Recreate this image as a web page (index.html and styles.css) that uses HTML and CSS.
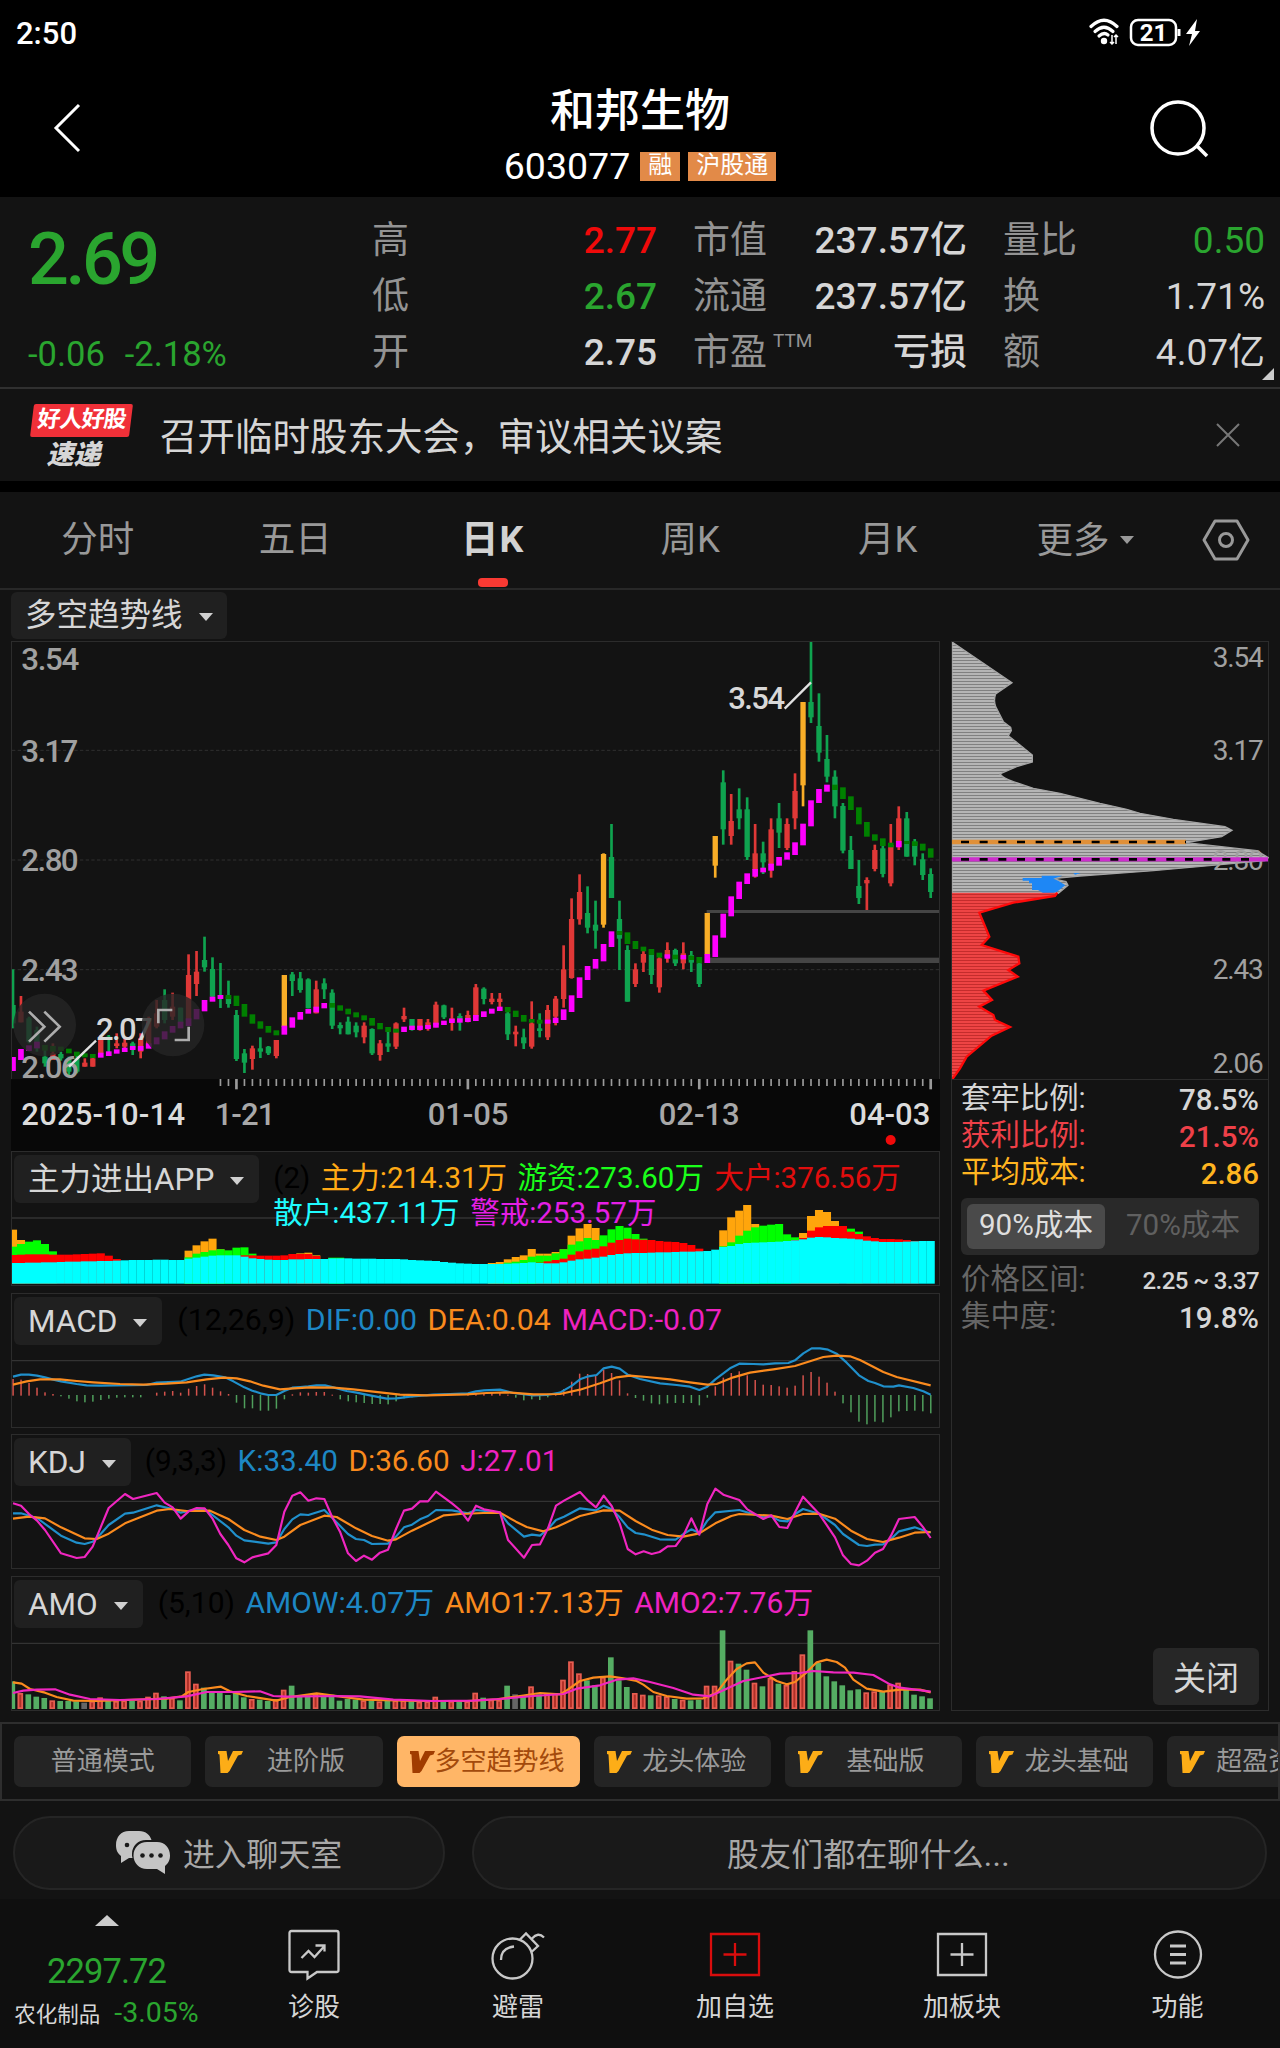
FILE: index.html
```html
<!DOCTYPE html>
<html lang="zh-CN">

<head>
  <meta charset="utf-8">
  <meta name="viewport" content="width=device-width, initial-scale=1.0">
  <title>和邦生物 603077</title>
  <link rel="stylesheet" href="styles.css">
</head>

<body>
  <div class="status">
    <span class="time">2:50</span>
    <svg class="status-icons" width="114" height="30" viewBox="0 0 114 30">
      <g fill="none" stroke="#fff" stroke-width="3.2" stroke-linecap="round">
        <path d="M3 9.5Q16-3 29 9.5" />
        <path d="M7 14.500Q16 6 25 14.500" />
        <path d="M11 19Q16 14.500 20 18" />
      </g>
      <circle cx="16" cy="24" r="3.200" fill="#fff" />
      <path d="M24 18v9M28 27v-9M22 25l2 2 2-2M26 20l2-2 2 2" fill="none" stroke="#fff" stroke-width="1.500" />
      <rect x="43" y="3" width="45" height="25" rx="7" fill="none" stroke="#fff" stroke-width="2.500" />
      <text x="65.500" y="24" class="battery-text" text-anchor="middle">21</text>
      <path d="M91 12v7" stroke="#fff" stroke-width="3" />
      <path d="M109 2l-11 15h6l-3 12 11-15h-5z" fill="#fff" />
    </svg>
  </div>

  <header class="header">
    <svg class="back" width="30" height="50" viewBox="0 0 30 50">
      <path d="M27 2L4 25l23 23" fill="none" stroke="#fff" stroke-width="3" />
    </svg>
    <div class="title">
      <h1>和邦生物</h1>
      <div class="code">603077<span class="tag">融</span><span class="tag">沪股通</span></div>
    </div>
    <svg class="search" width="60" height="60" viewBox="0 0 60 60">
      <circle cx="28" cy="28" r="26" fill="none" stroke="#fff" stroke-width="3.500" />
      <path d="M47 46l10 10" stroke="#fff" stroke-width="3.500" />
    </svg>
  </header>

  <section class="quote">
    <div class="price-box">
      <div class="price">2.69</div>
      <div class="change"><span>-0.06</span><span>-2.18%</span></div>
    </div>
    <dl class="stats">
      <div><dt>高</dt><dd class="up">2.77</dd></div>
      <div><dt>低</dt><dd class="down">2.67</dd></div>
      <div><dt>开</dt><dd>2.75</dd></div>
    </dl>
    <dl class="stats mid">
      <div><dt>市值</dt><dd>237.57亿</dd></div>
      <div><dt>流通</dt><dd>237.57亿</dd></div>
      <div><dt>市盈<sup>TTM</sup></dt><dd class="strong">亏损</dd></div>
    </dl>
    <dl class="stats last">
      <div><dt>量比</dt><dd class="down">0.50</dd></div>
      <div><dt>换</dt><dd>1.71%</dd></div>
      <div><dt>额</dt><dd>4.07亿</dd></div>
    </dl>
    <i class="corner"></i>
  </section>

  <section class="news">
    <div class="news-logo"><b>好人好股</b><em>速递</em></div>
    <p>召开临时股东大会，审议相关议案</p>
    <svg width="24" height="24" viewBox="0 0 24 24">
      <path d="M1 1l22 22M23 1L1 23" stroke="#777" stroke-width="2" />
    </svg>
  </section>

  <nav class="tabs">
    <a>分时</a>
    <a>五日</a>
    <a class="active">日K</a>
    <a>周K</a>
    <a>月K</a>
    <a class="more">更多<i class="caret small"></i></a>
    <svg width="50" height="44" viewBox="0 0 50 44">
      <path d="M14 3h22l11 19-11 19H14L3 22z" fill="none" stroke="#999" stroke-width="3" stroke-linejoin="round" />
      <circle cx="25" cy="22" r="6.500" fill="none" stroke="#999" stroke-width="3" />
    </svg>
  </nav>

  <main class="main">
    <div class="charts">
      <div class="line-select"><button class="select">多空趋势线<i class="caret"></i></button></div>

      <div class="kline">
        <svg id="kline" width="927" height="437" viewBox="36 36 2781 1311">
          <g class="grid">
            <path d="M36 361H2817M36 690H2817M36 1019H2817" />
          </g>
          <rect x="2120" y="840" width="700" height="9" fill="#454545" />
          <rect x="2120" y="983" width="700" height="16" fill="#454545" />
          <g id="candles"></g>
          <g id="trend"></g>
          <g class="scale">
            <text x="64" y="119" textLength="174">3.54</text>
            <text x="64" y="395" textLength="171">3.17</text>
            <text x="64" y="722" textLength="172">2.80</text>
            <text x="64" y="1052" textLength="172">2.43</text>
            <text x="64" y="1345" textLength="172">2.06</text>
          </g>
          <g class="mark">
            <text x="2185" y="236" textLength="170">3.54</text>
            <path d="M2354 236L2433 157" />
            <text x="288" y="1231" textLength="170">2.07</text>
            <path d="M207 1310L288 1232" />
          </g>
          <g class="tool">
            <circle cx="134" cy="1185" r="94" />
            <path d="M87 1145l46 45-46 45M133 1145l46 45-46 45" />
            <circle cx="519" cy="1185" r="94" />
            <path d="M475 1180v-40h42M566 1190v40h-42" />
          </g>
        </svg>
      </div>

      <div class="axis">
        <svg width="929" height="72" viewBox="33 1347 2787 216">
          <g id="ticks"></g>
          <g class="dates">
            <text x="64" y="1486" textLength="491" class="on">2025-10-14</text>
            <text x="644" y="1486" textLength="182">1-21</text>
            <text x="1283" y="1486" textLength="242">01-05</text>
            <text x="1976" y="1486" textLength="243">02-13</text>
            <text x="2548" y="1486" textLength="243" class="on">04-03</text>
          </g>
          <circle cx="2672" cy="1530" r="15" fill="#f00a0a" />
        </svg>
      </div>

      <div class="panel">
        <svg id="funds" width="927" height="133" viewBox="36 216 2781 399"></svg>
        <button class="select">主力进出APP<i class="caret"></i></button>
        <p class="legend funds-legend"><span class="k">(2)</span><span class="gold">主力:214.31万</span><span class="lime">游资:273.60万</span><span class="red">大户:376.56万</span><br><span class="cyan">散户:437.11万</span><span class="purple">警戒:253.57万</span></p>
      </div>
      <div class="panel">
        <svg id="macd" width="927" height="133" viewBox="36 640 2781 399"></svg>
        <button class="select">MACD<i class="caret"></i></button>
        <p class="legend macd-legend"><span class="k">(12,26,9)</span><span class="blue">DIF:0.00</span><span class="orange">DEA:0.04</span><span class="pink">MACD:-0.07</span></p>
      </div>
      <div class="panel">
        <svg id="kdj" width="927" height="133" viewBox="36 15 2781 399"></svg>
        <button class="select">KDJ<i class="caret"></i></button>
        <p class="legend kdj-legend"><span class="k">(9,3,3)</span><span class="blue">K:33.40</span><span class="orange">D:36.60</span><span class="pink">J:27.01</span></p>
      </div>
      <div class="panel">
        <svg id="amo" width="927" height="133" viewBox="36 440 2781 399"></svg>
        <button class="select">AMO<i class="caret"></i></button>
        <p class="legend"><span class="k">(5,10)</span><span class="blue">AMOW:4.07万</span><span class="orange">AMO1:7.13万</span><span class="pink">AMO2:7.76万</span></p>
      </div>
    </div>

    <aside class="chips">
      <svg width="317" height="437" viewBox="36 36 951 1311">
        <defs>
          <pattern id="grayLines" width="20" height="9" patternUnits="userSpaceOnUse">
            <rect width="20" height="9" fill="#b5b5b5" />
            <rect width="20" height="3" fill="#808080" />
          </pattern>
          <pattern id="redLines" width="20" height="9" patternUnits="userSpaceOnUse">
            <rect width="20" height="9" fill="#ee4444" />
            <rect width="20" height="3" fill="#c42c2c" />
          </pattern>
        </defs>
        <path fill="url(#grayLines)" stroke="#a5a5a5" stroke-width="4"
          d="M36 36L216 158L167 192Q160 210 167 230L190 275L212 292L214 302L205 317L240 345L277 375V396L230 410L180 432Q190 445 220 455L280 475L360 490L480 520L560 538L600 550L700 568L855 590L876 601L845 620L738 638L950 662L985 683L975 692L640 722L420 738L338 746L378 755L384 766L355 790H36z" />
        <path fill="#1e87f5" d="M400 729h22l-17 5zM305 737h62l-27 9 16 7 20 13-26 20-30 10-26-16h-18v-20h-9v-8h-19v-8h57z" />
        <path fill="url(#redLines)" d="M36 788H352L345 798L220 818L118 848L148 920L125 945L235 980L238 1000L205 1020L233 1040L130 1082L156 1110L118 1130L160 1155L165 1170L210 1191L155 1217L80 1280L60 1315L38 1346H36z" />
        <path class="red-edge" d="M352 788L345 798L220 818L118 848L148 920L125 945L235 980L238 1000L205 1020L233 1040L130 1082L156 1110L118 1130L160 1155L165 1170L210 1191L155 1217L80 1280L60 1315L38 1346" />
        <g class="scale thin">
          <text x="818" y="111" textLength="153">3.54</text>
          <text x="818" y="391" textLength="153">3.17</text>
          <text x="818" y="719" textLength="153">2.80</text>
          <text x="818" y="1048" textLength="153">2.43</text>
          <text x="818" y="1328" textLength="153">2.06</text>
        </g>
        <path d="M36 636H738" stroke="#e09038" stroke-width="13" />
        <path d="M63 636H738" stroke="#000" stroke-width="8" stroke-dasharray="24 32" />
        <path d="M36 688H984" stroke="#cc2fcc" stroke-width="13" />
        <path d="M63 688H930" stroke="#000" stroke-width="8" stroke-dasharray="24 32" />
      </svg>
      <div class="chip-info">
        <div class="row"><span>套牢比例:</span><b>78.5%</b></div>
        <div class="row hit"><span>获利比例:</span><b>21.5%</b></div>
        <div class="row avg"><span>平均成本:</span><b>2.86</b></div>
        <div class="toggle"><span class="on">90%成本</span><span>70%成本</span></div>
        <div class="row dim"><span>价格区间:</span><b class="range">2.25 ~ 3.37</b></div>
        <div class="row dim"><span>集中度:</span><b>19.8%</b></div>
      </div>
      <button class="close">关闭</button>
    </aside>
  </main>

  <div class="modes">
    <span class="mode plain">普通模式</span>
    <span class="mode"><svg class="vip" viewBox="0 0 25 24"><use href="#v" /></svg><b>进阶版</b></span>
    <span class="mode active"><svg class="vip" viewBox="0 0 25 24"><use href="#v" /></svg><b>多空趋势线</b></span>
    <span class="mode"><svg class="vip" viewBox="0 0 25 24"><use href="#v" /></svg><b>龙头体验</b></span>
    <span class="mode"><svg class="vip" viewBox="0 0 25 24"><use href="#v" /></svg><b>基础版</b></span>
    <span class="mode"><svg class="vip" viewBox="0 0 25 24"><use href="#v" /></svg><b>龙头基础</b></span>
    <span class="mode"><svg class="vip" viewBox="0 0 25 24"><use href="#v" /></svg><b>超盈资金</b></span>
  </div>
  <svg width="0" height="0" class="defs">
    <symbol id="v" viewBox="0 0 25 24">
      <path d="M0 1h8.500l1.500 10 5-10h10l-1.500 3.500-3.500 1L11.500 21 9.500 23H2.500L1.500 4.500 0 4z" fill="currentColor" />
    </symbol>
  </svg>

  <div class="chat">
    <a class="room">
      <svg width="55" height="44" viewBox="0 0 55 44">
        <path d="M13 0h10c7 0 11 4 12.500 9H30c-8 0-14 6-14 14 0 2 0 2 .5 4H13l-8 5v-7C1 22 0 18 0 14 0 6 5 0 13 0z" fill="#c4c4c4" />
        <path d="M31 11h10c8 0 13 6 13 13.500 0 5-2 8-5 10.500V43l-8-5H31c-8 0-13.500-6-13.500-13.500S23 11 31 11z" fill="#c4c4c4" />
        <g fill="#191919">
          <circle cx="11" cy="14" r="2.300" />
          <circle cx="26.500" cy="24.500" r="2.300" />
          <circle cx="35.500" cy="24.500" r="2.300" />
          <circle cx="44.500" cy="24.500" r="2.300" />
        </g>
      </svg>进入聊天室
    </a>
    <a class="talk">股友们都在聊什么...</a>
  </div>

  <footer class="bottom">
    <div class="sector">
      <i class="arrow-up"></i>
      <strong>2297.72</strong>
      <p>农化制品<span>-3.05%</span></p>
    </div>
    <a>
      <svg viewBox="0 0 54 54">
        <path d="M2.500 5q0-2 2-2h45q2 0 2 2v37q0 2-2 2H30l-9.500 6.500V44h-16q-2 0-2-2zM14.500 30l7-7 6 6L37.500 18M28.500 17.500h9v6" />
      </svg>
      诊股
    </a>
    <a>
      <svg viewBox="0 0 54 54">
        <circle cx="21.500" cy="30.500" r="20" />
        <path d="M10 32q0-12 13-13.500M29 11.500l6-6 12 12.500-6.500 6M41 10.500q6-7 12-1" />
      </svg>
      避雷
    </a>
    <a class="add">
      <svg viewBox="0 0 54 54">
        <path d="M3 6h48v41H3zM27 15v23M15.500 26.500h23" />
      </svg>
      <span>加自选</span>
    </a>
    <a>
      <svg viewBox="0 0 54 54">
        <path d="M3 6h48v41H3zM27 15v23M15.500 26.500h23" />
      </svg>
      加板块
    </a>
    <a>
      <svg viewBox="0 0 54 54">
        <circle cx="27" cy="26.500" r="23" />
        <path d="M19 18h16M19 26.500h16M19 35h16" stroke-width="3" />
      </svg>
      功能
    </a>
  </footer>

  <script src="charts.js"></script>
</body>

</html>
```
FILE: styles.css
```css
* {
  box-sizing: border-box;
}

body {
  margin: 0;
  width: 1280px;
  background-color: #131313;
  color: #d6d6d6;
  font-family: Roboto, "Noto Sans CJK SC", sans-serif;
  overflow-x: hidden;
}

h1,
p,
dl,
dd {
  margin: 0;
}

svg {
  display: block;
  flex: none;
}

button {
  border: none;
  color: inherit;
  font-family: inherit;
}

.up {
  color: #f00a0a;
}

.down {
  color: #2aa52f;
}

/* status bar */
.status {
  display: flex;
  justify-content: space-between;
  height: 64px;
  padding: 17px 78px 0 16px;
  background-color: #000;
  color: #fff;
}

.time {
  font-size: 31px;
  font-weight: 500;
  line-height: 33px;
}

.battery-text {
  fill: #fff;
  font-size: 24px;
  font-weight: 700;
}

/* header */
.header {
  display: flex;
  justify-content: space-between;
  height: 133px;
  padding: 0 70px 0 52px;
  background-color: #000;
  color: #fff;
}

.back {
  margin-top: 39px;
}

.search {
  margin-top: 36px;
}

.title {
  display: flex;
  flex-direction: column;
  align-items: center;
  margin-left: 48px;
}

.title h1 {
  margin-top: 18px;
  font-size: 45px;
  font-weight: 500;
  line-height: 60px;
}

.code {
  display: flex;
  align-items: center;
  font-size: 37.5px;
  line-height: 46px;
  margin-top: 1px;
}

.tag {
  height: 29px;
  margin-left: 10px;
  padding: 0 8px;
  background-color: #e28a48;
  font-size: 24px;
  line-height: 27px;
}

.tag+.tag {
  margin-left: 8px;
}

/* quote */
.quote {
  position: relative;
  display: flex;
  height: 192px;
  padding-top: 16px;
  border-bottom: 2px solid #303030;
}

.price-box {
  width: 372px;
  padding-left: 28px;
  color: #2aa52f;
}

.price {
  margin-top: 4px;
  font-size: 72px;
  font-weight: 500;
  line-height: 86px;
  letter-spacing: -3.5px;
}

.change {
  display: flex;
  gap: 20px;
  margin-top: 31px;
  font-size: 34.5px;
  line-height: 40px;
}

.stats {
  width: 285px;
  margin-right: 36px;
  font-size: 37px;
}

.stats.mid {
  width: 274px;
}

.stats.last {
  width: 262px;
  margin-right: 0;
}

.stats div {
  display: flex;
  justify-content: space-between;
  height: 56px;
  line-height: 56px;
}

.stats dt {
  color: #939393;
}

.stats dd {
  font-weight: 500;
}

.stats.last dd {
  font-weight: 400;
}

.stats sup {
  margin-left: 6px;
  font-size: 19px;
  line-height: 0;
  vertical-align: 18px;
}

.corner {
  position: absolute;
  right: 6px;
  bottom: 7px;
  border-left: 12px solid transparent;
  border-bottom: 12px solid #ccc;
}

/* news */
.news {
  display: flex;
  align-items: center;
  height: 103px;
  padding: 0 40px 0 30px;
  border-bottom: 11px solid #000;
}

.news p {
  flex: 1;
  font-size: 37.5px;
  padding-bottom: 4px;
}

.news-logo {
  display: flex;
  flex-direction: column;
  align-items: center;
  width: 103px;
  margin-right: 27px;
}

.news-logo b {
  width: 99px;
  height: 33px;
  margin-top: 2px;
  background-color: #f03038;
  color: #fff;
  font-size: 23px;
  line-height: 31px;
  letter-spacing: -1px;
  text-align: center;
  transform: skewX(-7deg);
  border-radius: 2px;
}

.news-logo em {
  margin: 4px 16px 0 0;
  font-size: 27px;
  font-weight: 900;
  line-height: 28px;
}

/* tabs */
.tabs {
  position: relative;
  display: flex;
  align-items: center;
  height: 98px;
  border-bottom: 2px solid #282828;
  color: #999;
  font-size: 36.5px;
}

.tabs a {
  position: relative;
  left: -1px;
  width: 197.5px;
  height: 96px;
  line-height: 95px;
  text-align: center;
}

.tabs .active {
  color: #d2d2d2;
  font-size: 37.5px;
  font-weight: 700;
  letter-spacing: 1px;
}

.tabs .active::after {
  content: "";
  position: absolute;
  left: 84px;
  bottom: 1px;
  width: 30px;
  height: 9px;
  border-radius: 4px;
  background-color: #f93a33;
}

.tabs .more {
  display: flex;
  align-items: center;
  width: 213px;
  padding-left: 50px;
}

.tabs svg {
  margin-bottom: 1px;
}

.caret {
  display: inline-block;
  margin-left: 16px;
  border: 7px solid transparent;
  border-top: 8px solid #d0d0d0;
  border-bottom: none;
  vertical-align: 5px;
}

.caret.small {
  margin: 0 0 0 10px;
  border-top-color: #999;
}

/* charts */
.main {
  display: flex;
  height: 1131px;
  padding-left: 11px;
}

.charts {
  width: 929px;
}

.line-select {
  height: 51px;
  padding-top: 2px;
}

.select {
  position: relative;
  height: 47px;
  padding: 0 14px 0 14px;
  border-radius: 6px;
  background-color: #202020;
  font-size: 31.5px;
  line-height: 47px;
  white-space: nowrap;
}

.kline {
  border: 1px solid #2c2c2c;
  border-bottom: none;
}

.grid {
  stroke: #303030;
  stroke-width: 3;
  stroke-dasharray: 10 7;
}

.scale {
  fill: #a0a0a0;
  font-size: 94px;
  font-weight: 500;
}

.scale.thin {
  font-size: 84px;
  font-weight: 400;
}

.mark {
  fill: #d8d8d8;
  stroke-width: 7;
  font-size: 93px;
  font-weight: 500;
}

.mark path {
  stroke: #e2e2e2;
}

.tool circle {
  fill: #252525;
  opacity: .8;
}

.tool path {
  fill: none;
  stroke: #adadad;
  stroke-width: 8;
}

.axis {
  height: 72px;
  background-color: #080808;
}

.dates {
  fill: #a8a8a8;
  font-size: 93px;
  font-weight: 500;
}

.dates .on {
  fill: #dcdcdc;
}

.red-edge {
  fill: none;
  stroke: #ff0a0a;
  stroke-width: 7;
}

.panel {
  position: relative;
  display: flex;
  height: 135px;
  margin-bottom: 6.5px;
  border: 1px solid #2c2c2c;
}

.panel>svg {
  position: absolute;
  left: 0;
  top: 0;
}

.panel .select {
  height: 48px;
  margin: 3px 0 0 2px;
  padding: 0 15px 0 14px;
  font-size: 31.5px;
  line-height: 49px;
}

.legend {
  position: relative;
  margin: 9px 0 0 15px;
  font-size: 30px;
  line-height: 34.5px;
  white-space: nowrap;
}

.legend span {
  margin-right: 10.5px;
}

.funds-legend {
  margin-left: 14px;
  font-size: 29.5px;
}

.macd-legend {
  font-size: 30.3px;
}

.kdj-legend {
  margin-left: 14px;
  font-size: 29.7px;
}

.k {
  color: #000;
}

.gold {
  color: #ffa915;
}

.lime {
  color: #1aff1a;
}

.red {
  color: #e00d0d;
}

.cyan {
  color: #1ffcff;
}

.purple {
  color: #e51fe5;
}

.blue {
  color: #1d87c4;
}

.orange {
  color: #f98a1d;
}

.pink {
  color: #ee22c0;
}

/* cost distribution */
.chips {
  display: flex;
  flex-direction: column;
  width: 318px;
  height: 1070px;
  margin: 51px 0 0 11px;
  border: 1px solid #2c2c2c;
}

.chip-info {
  padding: 0 9px 0 9px;
  border-top: 1px solid #2c2c2c;
}

.row {
  display: flex;
  justify-content: space-between;
  height: 37px;
  font-size: 29.4px;
  line-height: 36px;
}

.row b {
  font-weight: 500;
  padding-top: 2px;
}

.row b.range {
  font-size: 24px;
  letter-spacing: -.6px;
}

.hit {
  color: #ee4048;
}

.avg {
  color: #ffb520;
}

.dim span {
  color: #666;
}

.toggle {
  display: flex;
  height: 57px;
  margin: 7px 0 6px;
  padding: 6px;
  border-radius: 6px;
  background-color: #292929;
  color: #606060;
  font-size: 29.6px;
  line-height: 43px;
  text-align: center;
}

.toggle span {
  flex: 1;
  padding-left: 8px;
}

.toggle .on {
  flex: none;
  width: 138px;
  padding-left: 0;
  border-radius: 6px;
  background-color: #4a4a4a;
  color: #dedede;
}

.close {
  width: 106px;
  height: 57px;
  margin: auto 9px 5px auto;
  padding-bottom: 3px;
  border-radius: 6px;
  background-color: #272727;
  font-size: 33px;
}

/* mode strip */
.modes {
  display: flex;
  gap: 14px;
  height: 79px;
  margin-top: 1px;
  padding: 12px 0 0 12px;
  border: 2px solid #2e2e2e;
  overflow: hidden;
}

.mode {
  display: flex;
  flex: none;
  align-items: center;
  width: 177.3px;
  height: 51px;
  padding-left: 13px;
  border-radius: 7px;
  background-color: #242424;
  color: #9a9a9a;
  font-size: 26px;
  line-height: 48px;
}

.mode b {
  flex: 1;
  padding: 0 14px 2px 0;
  font-weight: 400;
  text-align: center;
  white-space: nowrap;
}

.mode.plain {
  justify-content: center;
  padding: 0 0 2px;
}

.mode.active {
  width: 183px;
  background-color: #ffb667;
  color: #a34a0c;
}

.mode.active b {
  padding-right: 15px;
}

.vip {
  width: 25px;
  height: 24px;
  color: #fdad17;
}

.active .vip {
  color: #a03c00;
}

.defs {
  position: absolute;
}

/* chat */
.chat {
  display: flex;
  gap: 27px;
  height: 98px;
  padding: 15px 13px 0;
}

.chat a {
  display: flex;
  align-items: center;
  justify-content: center;
  height: 74px;
  padding-bottom: 2px;
  border: 2px solid #252525;
  border-radius: 37px;
  background-color: #191919;
  color: #a8a8a8;
  font-size: 31.800px;
}

.room {
  width: 432px;
}

.room svg {
  margin: 2px 12px 0 0;
}

.chat .talk {
  flex: 1;
  padding-right: 2px;
  letter-spacing: .3px;
}

/* bottom bar */
.bottom {
  display: grid;
  grid-template-columns: 213px 202px 206px 228px 226px 205px;
  height: 149px;
  background-color: #0f0f0f;
}

.bottom a {
  display: flex;
  flex-direction: column;
  align-items: center;
  padding-top: 29px;
  font-size: 26px;
  line-height: 40px;
}

.bottom a svg {
  width: 54px;
  height: 54px;
  margin-bottom: 5px;
  fill: none;
  stroke: #c8c8c8;
  stroke-width: 2.300;
}

.bottom .add svg {
  stroke: #d90d0d;
}

.sector {
  display: flex;
  flex-direction: column;
  align-items: center;
  padding-top: 16px;
}

.arrow-up {
  border: 12px solid transparent;
  border-top: none;
  border-bottom: 11px solid #ccc;
}

.sector strong {
  margin-top: 25px;
  color: #2aa52f;
  font-size: 34.5px;
  font-weight: 400;
  line-height: 40px;
  letter-spacing: -.9px;
}

.sector p {
  font-size: 21.5px;
  line-height: 43px;
  white-space: nowrap;
}

.sector span {
  margin-left: 14px;
  color: #2aa52f;
  font-size: 28.5px;
}
```
FILE: charts.js
```js
var STEP = 23.94;
var FIRST = 39;

function cx(i) {
  return FIRST + i * STEP;
}

function rect(x, y, w, h, fill) {
  return '<rect x="' + x.toFixed(1) + '" y="' + y + '" width="' + w + '" height="' + h + '" fill="' + fill + '"/>';
}

function line(points, color) {
  return '<polyline points="' + points + '" fill="none" stroke="' + color + '" stroke-width="6.5" stroke-linejoin="round"/>';
}

function midline(y) {
  return '<path d="M36 ' + y + 'H2817" stroke="#333" stroke-width="4"/>';
}

// color, high, body top, body bottom, low
var candles = `g 1018 1125 1180 1195|r 1098 1145 1177 1177|g 1160 1165 1235 1240|g 1190 1200 1255 1265|g 1250 1280 1300 1310|r 1240 1270 1290 1290|g 1265 1272 1285 1292|g 1280 1285 1325 1340
g 1270 1285 1325 1330|r 1285 1298 1310 1310|r 1280 1285 1310 1310|r 1215 1230 1270 1275|g 1215 1220 1230 1268|r 1210 1240 1248 1255|r 1225 1238 1250 1255|g 1235 1240 1255 1275|r 1210 1225 1265 1285|r 1160 1170 1250 1250
r 1110 1150 1190 1195|g 1078 1110 1170 1180|r 1088 1130 1160 1170|g 1133 1133 1180 1180|r 973 1035 1170 1170|r 963 1025 1062 1098|g 920 990 1012 1025|g 982 1017 1100 1108|g 999 1095 1105 1134|g 1052 1100 1122 1133
g 1140 1155 1287 1293|g 1257 1270 1298 1329|r 1247 1255 1287 1319|g 1222 1255 1265 1284|g 1248 1250 1270 1275|r 1230 1230 1278 1285|y 1035 1035 1190 1190|g 1026 1033 1053 1098|g 1026 1045 1080 1088|g 1045 1048 1135 1135
r 1052 1078 1150 1150|g 1045 1060 1078 1107|g 1078 1088 1187 1197|g 1177 1185 1195 1213|g 1160 1175 1213 1213|g 1177 1187 1207 1222|r 1177 1187 1222 1240|g 1195 1197 1270 1275|r 1230 1240 1275 1292|g 1205 1240 1250 1266
r 1177 1180 1250 1257|r 1133 1158 1168 1176|g 1167 1167 1195 1202|r 1167 1167 1195 1202|r 1167 1177 1195 1202|r 1115 1124 1185 1192|g 1124 1126 1162 1167|r 1133 1165 1175 1202|g 1150 1158 1172 1202|r 1142 1155 1175 1177
r 1062 1072 1160 1170|g 1072 1076 1107 1123|r 1089 1106 1116 1123|r 1089 1106 1116 1132|g 1140 1150 1213 1230|r 1187 1205 1213 1249|g 1196 1222 1240 1257|r 1114 1180 1250 1256|g 1150 1195 1203 1222|r 1125 1140 1222 1230
r 1098 1106 1160 1186|r 946 1018 1107 1133|r 805 867 1044 1046|r 733 786 868 884|g 769 849 893 910|g 812 884 902 956|y 670 672 884 893|g 582 681 804 804|g 812 867 926 1020|g 946 960 1115 1115
r 1000 1018 1062 1071|r 960 972 998 1026|g 965 975 1035 1062|r 975 985 1072 1088|r 937 960 982 998|g 956 960 1000 1008|r 937 970 1000 1018|g 963 975 998 1026|g 985 1000 1062 1071|y 849 849 973 973
y 618 618 707 743|g 421 457 598 644|r 492 573 618 644|g 475 538 565 598|g 502 538 681 690|r 582 670 720 743|g 635 670 697 732|r 565 598 705 743|g 519 565 608 654|r 565 582 654 660
r 430 483 565 598|y 216 216 466 529|g 32 216 262 279|g 190 288 368 395|g 315 387 440 457|g 421 440 529 565|g 519 528 662 670|g 618 660 717 717|g 690 768 804 822|r 742 750 760 840
r 644 660 717 724|g 645 655 732 742|r 582 645 760 769|r 529 565 650 660|g 546 565 680 680|g 627 635 680 706|g 670 688 735 750|g 715 732 786 804`.split(/[|\n]/);

var trend = `m 1281 1323|m 1257 1290|m 1246 1263|m 1235 1255|d 1245 1262|d 1248 1265|d 1250 1262|d 1256 1270|d 1265 1278|d 1270 1282|d 1272 1284|m 1268 1283|m 1264 1278|m 1258 1271|m 1253 1266|m 1248 1260
m 1248 1262|m 1240 1256|m 1222 1243|m 1204 1228|m 1188 1208|m 1175 1195|m 1165 1188|m 1137 1168|m 1110 1144|m 1100 1115|m 1095 1107|d 1095 1107|d 1097 1128|d 1122 1160|d 1153 1181|d 1174 1196
d 1188 1208|d 1201 1216|m 1187 1214|m 1162 1193|m 1146 1169|m 1137 1151|m 1130 1147|m 1119 1135|d 1119 1133|d 1126 1142|d 1136 1153|d 1147 1162|d 1156 1171|d 1164 1187|d 1179 1198|d 1191 1206
d 1196 1208|m 1190 1206|m 1187 1200|m 1187 1200|m 1185 1197|m 1178 1193|m 1172 1185|m 1166 1179|m 1165 1178|m 1164 1176|m 1155 1173|m 1144 1161|m 1136 1151|m 1130 1143|d 1131 1147|d 1142 1161
d 1155 1175|d 1167 1178|d 1169 1181|m 1169 1181|m 1163 1179|m 1138 1170|m 1096 1146|m 1042 1104|m 1008 1050|m 987 1016|m 942 994|m 904 951|d 903 915|d 907 942|d 933 957|d 950 964
d 957 975|d 968 983|m 973 986|d 974 988|m 975 988|d 977 990|d 981 999|m 972 999|m 916 981|m 851 923|m 799 859|m 755 807|m 730 762|m 717 740|m 713 727|m 701 722
m 681 707|m 667 689|m 637 675|m 581 646|m 511 589|m 477 519|m 464 485|d 464 480|d 472 507|d 499 540|d 532 583|d 576 620|d 613 632|d 625 648|d 638 652|m 633 652
d 633 642|d 634 648|d 641 662|d 655 683`.split(/[|\n]/);

var colors = { g: '#0fa34f', r: '#e03837', y: '#f8ad27', m: '#ff00ff', d: '#008000' };

var html = '';
candles.forEach(function (row, i) {
  var c = row.split(' ');
  var color = colors[c[0]];
  html += rect(cx(i) - 4, c[1], 8, c[4] - c[1], color);
  html += rect(cx(i) - 8, c[2], 16, c[3] - c[2], color);
});
document.getElementById('candles').innerHTML = html;

html = '';
trend.forEach(function (row, i) {
  var t = row.split(' ');
  html += rect(cx(i) - 8.5, t[1], 17, t[2] - t[1], colors[t[0]]);
});
document.getElementById('trend').innerHTML = html;

html = '';
for (var i = 26; i < 116; i++) {
  var big = i % 29 == 28;
  html += rect(cx(i) - (big ? 4 : 2.5), 1347, big ? 8 : 5, big ? 31 : 21, '#9a9a9a');
}
document.getElementById('ticks').innerHTML = html;

// money flow, start index followed by the bar tops
var flow = [
  ['#ffa50c', [[0, 449, 480], [22, 512, 496, 484, 476, 508], [36, 520, 518, 526], [60, 549, 546, 538, 531, 526, 507, 521, 521, 516, 508, 467, 445, 432, 444],
    [89, 451, 412, 392, 375, 432], [99, 459, 408, 390, 396, 423]]],
  ['#00ff00', [[0, 500, 492, 485, 481, 492, 514], [22, 532, 521, 516, 511, 508, 511, 503, 502, 521], [40, 533, 533], [62, 548, 545, 540, 530, 527, 527, 520, 508, 494, 484, 474, 480, 466, 448, 438, 443, 462, 476],
    [89, 499, 487, 467, 452, 442, 437, 434, 432, 463, 472], [105, 446, 455]]],
  ['#ff0000', [[0, 525, 524, 523, 523, 523, 524, 524, 524, 523, 522, 521, 520, 527, 537], [29, 526, 526, 527, 527, 527, 526, 522, 522, 522, 528, 537],
    [66, 548, 544, 540, 536, 524, 514, 509, 506, 499, 488, 480, 476, 478, 479, 480, 483, 485, 486, 489, 495, 506],
    [98, 480, 474, 452, 442, 438, 438, 438, 455, 462, 469, 474, 477, 477, 478, 480, 483]]],
  ['#00ffff', [[0, 549, 549, 548, 548, 547, 547, 546, 545, 545, 544, 544, 543, 543, 542, 541, 540, 540, 540, 539, 539, 540, 540, 536, 533, 530, 527, 526, 526, 526, 530, 535, 537, 539, 540, 540, 538, 538, 537, 537, 537, 535, 535, 535, 536, 536, 536, 537, 537, 537, 538, 540, 541, 542, 543, 546, 548, 550, 551,
    552, 552, 552, 552, 551, 550, 549, 547, 549, 550, 550, 547, 542, 538, 536, 533, 530, 525, 522, 520, 519, 519, 518, 517, 517, 516, 515, 515, 514, 513, 509, 501, 498, 492, 489, 488, 487, 486, 485, 483, 481, 478, 473, 471, 472, 474, 475, 476, 478, 482, 484, 486, 486, 486, 485, 484, 483, 483]]]
];
html = midline(414);
flow.forEach(function (layer) {
  layer[1].forEach(function (run) {
    for (var n = 1; n < run.length; n++) {
      html += rect(cx(run[0] + n - 1) - 12, run[n], 24.2, 611 - run[n], layer[0]);
    }
  });
});
for (i = 0; i < 116; i++) {
  var top = flow[3][1][0][i + 1];
  html += '<rect x="' + (cx(i) + 10).toFixed(1) + '" y="' + top + '" width="4" height="' + (611 - top) + '" fill="#38a090" opacity=".85"/>';
}
document.getElementById('funds').innerHTML = html;

// MACD
var hist = [895, 897, 907, 921, 935, 940, 947, 954, 962, 965, 963, 958, 954, 951, 950, 950, 950, 944, 936, 933, 931, 936, 924, 916, 911, 921, 932, 940, 966, 983, 983, 990, 990, 984, 956, 941, 935, 936, 934, 934, 942, 956, 962, 965, 967, 970, 970, 971, 962, 953, 950, 944, 944, 944, 944, 944, 944, 942,
  938, 938, 936, 937, 942, 951, 959, 956, 958, 950, 943, 925, 903, 879, 880, 885, 867, 877, 899, 938, 952, 960, 968, 971, 968, 967, 967, 967, 974, 951, 917, 891, 877, 872, 884, 898, 912, 913, 917, 921, 915, 884, 874, 888, 906, 933, 968, 995, 1023, 1031, 1023, 1025, 1010, 992, 991, 990, 992, 998];
html = midline(840);
hist.forEach(function (v, i) {
  if (v < 944) html += rect(cx(i) - 2, v, 4.5, 945 - v, '#d4524c');
  if (v > 944) html += rect(cx(i) - 2, 943, 4.5, v - 943, '#4f9f5c');
});
html += line('39,888 63,882 87,882 111,885 135,890 160,897 183,902 230,910 260,914 300,915 440,913 470,906 540,903 565,895 590,887 613,882 640,884 675,890 700,902 733,920 757,930 781,938 805,943 829,943 853,931 877,921 901,919 925,917 950,914 975,914 1000,920 1040,931 1070,936 1110,944 1160,954 1190,953 1230,948 1300,942 1350,940 1404,938 1428,932 1452,929 1500,927 1540,937 1600,944 1640,943 1680,936 1716,915 1740,896 1765,887 1790,883 1811,863 1835,858 1859,864 1883,882 1920,895 1980,908 2030,913 2070,918 2098,928 2122,918 2146,896 2190,863 2218,849 2260,850 2290,851 2325,848 2365,847 2385,839 2410,818 2435,803 2460,803 2484,807 2510,819 2540,846 2577,884 2605,901 2625,907 2650,917 2680,918 2697,914 2740,922 2770,932 2792,942', '#2090cc');
html += line('39,912 80,902 120,896 180,896 230,901 280,905 360,910 430,912 500,909 560,905 620,896 670,891 710,893 750,902 790,915 840,926 870,924 930,920 1000,921 1060,926 1120,933 1200,942 1280,944 1400,941 1460,937 1520,935 1600,941 1680,940 1740,927 1800,908 1850,890 1890,885 1940,889 2010,896 2070,905 2122,912 2150,910 2200,890 2250,876 2320,866 2385,856 2430,842 2470,829 2510,825 2550,827 2580,838 2650,874 2690,889 2792,914', '#fb8b1e');
document.getElementById('macd').innerHTML = html;

// KDJ
html = midline(214);
html += line('39,250 63,250 111,264 183,317 230,338 254,342 278,335 302,312 326,285 375,251 399,248 470,226 518,237 542,248 590,238 614,237 685,292 709,317 733,331 805,341 829,337 853,297 877,268 901,253 925,255 973,240 997,264 1044,312 1068,327 1092,330 1116,342 1164,341 1188,320 1212,292 1236,284 1260,268 1284,258 1308,240 1356,241 1404,250 1428,240 1500,248 1524,280 1572,320 1596,314 1620,317 1644,297 1668,270 1692,260 1740,235 1788,241 1811,227 1835,238 1859,262 1883,292 1907,309 1931,313 1979,328 2027,329 2050,312 2074,298 2098,309 2122,272 2146,247 2218,240 2290,262 2314,259 2338,272 2362,274 2386,252 2409,237 2457,251 2505,285 2529,312 2577,345 2601,348 2625,344 2649,343 2673,327 2697,304 2744,292 2792,308', '#2090cc');
html += line('39,266 87,260 135,265 183,292 254,325 290,327 326,311 375,280 470,242 510,237 560,243 630,242 685,267 733,300 781,320 829,330 853,320 901,285 973,257 1010,261 1068,295 1116,318 1164,332 1188,328 1236,302 1332,256 1380,252 1450,249 1500,248 1548,275 1580,291 1630,304 1668,292 1740,258 1811,241 1859,242 1907,273 1955,299 2003,315 2050,320 2098,310 2146,280 2194,258 2218,252 2314,257 2362,267 2409,252 2457,251 2505,266 2553,302 2601,327 2649,336 2697,323 2744,308 2792,306', '#fb8b1e');
html += line('39,220 63,227 87,252 111,272 135,300 183,370 230,384 254,381 278,350 302,292 326,234 375,192 399,207 470,189 494,218 518,232 542,266 566,244 590,234 614,235 637,265 661,312 685,345 709,385 733,397 757,382 805,370 829,345 853,245 877,197 901,187 925,212 949,205 973,207 997,262 1020,305 1044,370 1068,393 1092,377 1116,389 1140,368 1164,359 1188,297 1212,242 1236,236 1260,214 1284,214 1308,185 1356,220 1380,240 1404,272 1428,227 1452,238 1500,247 1524,330 1572,383 1596,345 1620,343 1644,295 1668,227 1692,212 1740,186 1764,212 1788,232 1811,197 1835,228 1859,280 1883,357 1907,373 1931,364 1955,372 1979,366 2003,349 2027,348 2050,317 2074,265 2098,314 2122,222 2146,176 2170,194 2218,210 2242,238 2290,267 2314,256 2338,291 2362,294 2386,245 2409,200 2457,251 2505,322 2529,376 2553,402 2577,406 2601,392 2625,368 2649,357 2673,317 2697,267 2744,261 2768,290 2792,324', '#f026c0');
document.getElementById('kdj').innerHTML = html;

// AMO
var amo = 'g753 r788 g792 g799 g803 r810 g812 g812 g813 n817 r812 r801 g808 r812 r810 g812 r811 r799 r787 g798 r803 g810 r723 r760 g772 g782 g786 g794 g786 g801 r806 g808 g812 r806 r778 g766 g797 g796 r791 g797 g793 g811 g806 g808 r810 g811 r813 g812 r810 r810 g813 r814 r813 r799 g815 r812 g815 r813 r787 g802 r808 r809 g766 n792 g800 r768 g792 r790 r788 r748 r693 r729 g750 g765 r740 g681 g750 g770 r788 r793 g795 r795 r798 g806 r808 g810 g808 r766 r766 g600 r691 g700 g718 r757 g768 r743 g760 r764 r722 r672 g600 g698 g738 g753 g765 g780 g777 r786 r783 g783 r762 r757 g775 g793 g798 g804';
var amoColors = { g: '#55ad63', r: '#e65c50', n: '#666666' };
html = midline(639);
amo.split(' ').forEach(function (s, i) {
  var y = +s.slice(1);
  html += rect(cx(i) - 10.5, y, 17, 836 - y, amoColors[s[0]]);
  if (s[0] == 'r') html += rect(cx(i) - 5, y + 5, 6, 826 - y, '#b03028');
});
html += line('39,756 65,760 90,776 135,787 170,800 220,811 290,812 500,805 545,798 565,785 610,776 663,769 690,783 740,797 829,811 870,800 950,789 1000,796 1090,808 1250,812 1400,812 1490,807 1560,797 1620,788 1680,792 1700,780 1740,752 1780,742 1830,738 1870,744 1910,752 1930,763 1960,785 2000,797 2060,805 2110,804 2150,787 2180,748 2210,716 2240,699 2265,696 2290,727 2330,752 2360,762 2385,755 2420,726 2450,696 2480,688 2510,695 2535,712 2560,748 2600,775 2650,784 2700,778 2760,778 2792,786', '#fb8b1e');
html += line('39,788 70,781 110,778 165,777 210,793 270,806 360,809 470,806 560,798 620,785 700,785 780,783 820,797 860,799 1000,797 1080,798 1180,808 1300,812 1420,811 1500,806 1600,797 1690,791 1730,775 1800,765 1850,748 1900,744 1950,755 2020,773 2080,793 2130,798 2170,780 2230,752 2290,740 2340,730 2400,728 2440,722 2500,726 2560,727 2620,734 2670,762 2700,772 2792,784', '#f026c0');
document.getElementById('amo').innerHTML = html;
```
